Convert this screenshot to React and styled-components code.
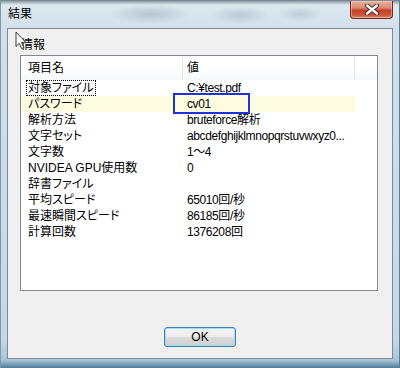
import React from 'react'
import styled, { createGlobalStyle } from 'styled-components'

const rows = [
	{ name: '対象ファイル', value: 'C:¥test.pdf', focus: true },
	{ name: 'パスワード', value: 'cv01', highlight: true },
	{ name: '解析方法', value: 'bruteforce解析' },
	{ name: '文字セット', value: 'abcdefghijklmnopqrstuvwxyz0...' },
	{ name: '文字数', value: '1～4' },
	{ name: 'NVIDEA GPU使用数', value: '0' },
	{ name: '辞書ファイル', value: '' },
	{ name: '平均スピード', value: '65010回/秒' },
	{ name: '最速瞬間スピード', value: '86185回/秒' },
	{ name: '計算回数', value: '1376208回' },
]

const App = () => {
	return (
		<>
			<GlobalStyle />
			<Window>
				<TitleBar>
					<Title>結果</Title>
					<CloseButton aria-label="閉じる">
						<svg width="16" height="11" viewBox="0 0 16 11">
							<path
								d="M3 1.5 L13 9.5 M13 1.5 L3 9.5"
								stroke="#3a2420"
								strokeWidth="4.2"
								strokeLinecap="round"
							/>
							<path
								d="M3 1.5 L13 9.5 M13 1.5 L3 9.5"
								stroke="#ffffff"
								strokeWidth="2.4"
								strokeLinecap="round"
							/>
						</svg>
					</CloseButton>
				</TitleBar>

				<Client>
					<GroupLabel>情報</GroupLabel>

					<List>
						<HeaderRow>
							<HeaderCell $width={162} $pad={7}>項目名</HeaderCell>
							<HeaderCell $width={172} $pad={4}>値</HeaderCell>
							<HeaderCell $width={22} $pad={0} $last />
						</HeaderRow>

						{rows.map((row) => (
							<Row key={row.name} $highlight={row.highlight}>
								<NameCell>
									{row.focus ? <Focus>{row.name}</Focus> : <Plain>{row.name}</Plain>}
								</NameCell>
								<ValueCell>{row.value}</ValueCell>
							</Row>
						))}

						<Marker />
					</List>

					<ButtonRow>
						<OkButton>OK</OkButton>
					</ButtonRow>

					<Cursor width="13" height="19" viewBox="0 0 13 19">
						<path
							d="M1 1 L1 15.5 L4.3 12.4 L6.6 17.6 L8.8 16.6 L6.5 11.6 L11 11.6 Z"
							fill="#ffffff"
							stroke="#3b3b3b"
							strokeWidth="1"
							strokeLinejoin="round"
						/>
					</Cursor>
				</Client>
			</Window>
		</>
	)
}

export default App

const GlobalStyle = createGlobalStyle`
	html, body {
		margin: 0;
		padding: 0;
	}

	body {
		width: 400px;
		height: 368px;
		overflow: hidden;
		font-family: "Liberation Sans", "Noto Sans CJK JP", sans-serif;
		font-size: 12px;
		font-feature-settings: "palt";
		color: #000;
	}
`

const Window = styled.div`
	position: relative;
	width: 400px;
	height: 368px;
	display: flex;
	flex-direction: column;
	box-sizing: border-box;
	background:
		radial-gradient(ellipse 40px 10px at 150px 14px, rgba(120, 135, 150, 0.35), transparent),
		radial-gradient(ellipse 30px 9px at 240px 15px, rgba(120, 135, 150, 0.3), transparent),
		radial-gradient(ellipse 22px 8px at 300px 14px, rgba(120, 135, 150, 0.25), transparent),
		linear-gradient(to bottom, #6e7a83 0, #a3b1bb 2px, #dde8ef 5px, #d3e0ea 28px, #c6d7e4 340px, #a9c4d8 360px, #4f7b97 368px);
	box-shadow: inset -1px 0 0 #5d7f96, inset 1px 0 0 #7d98ab;
`

const TitleBar = styled.div`
	height: 28px;
	display: flex;
	align-items: flex-start;
	padding: 0 7px 0 8px;
	box-sizing: border-box;
`

const Title = styled.span`
	margin-top: 7px;
	font-size: 12px;
	line-height: 14px;
`

const CloseButton = styled.button`
	margin-left: auto;
	margin-top: 1px;
	width: 43px;
	height: 18px;
	padding: 0;
	display: flex;
	align-items: center;
	justify-content: center;
	border: 1px solid #6b2a20;
	border-top: none;
	border-radius: 0 0 4px 4px;
	background: linear-gradient(to bottom, #e9b0a0 0%, #d98a74 40%, #c43f26 55%, #cf5a3d 85%, #e08a6a 100%);
	box-shadow: inset 0 0 0 1px rgba(255, 220, 210, 0.45);
`

const Client = styled.div`
	position: relative;
	flex: 1;
	margin: 0 7px 9px 7px;
	padding-top: 8px;
	display: flex;
	flex-direction: column;
	border: 1px solid #7b8a96;
	background: #f0f0f0;
`

const GroupLabel = styled.div`
	margin-left: 13px;
	height: 16px;
	line-height: 16px;
`

const List = styled.div`
	position: relative;
	margin: 2px 0 0 12px;
	width: 358px;
	height: 236px;
	box-sizing: border-box;
	border: 1px solid #828790;
	background: #ffffff;
`

const HeaderRow = styled.div`
	display: flex;
	height: 24px;
	background: linear-gradient(to bottom, #ffffff 0%, #ffffff 50%, #f7f8fa 100%);
`

const HeaderCell = styled.div`
	width: ${(p) => p.$width}px;
	padding-left: ${(p) => p.$pad}px;
	box-sizing: border-box;
	line-height: 24px;
	border-right: ${(p) => (p.$last ? 'none' : '1px solid #e3e6ea')};
`

const Row = styled.div`
	display: flex;
	width: 334px;
	height: 16px;
	background: ${(p) => (p.$highlight ? '#fdfce0' : 'transparent')};
`

const NameCell = styled.div`
	width: 162px;
	padding-left: 5px;
	box-sizing: border-box;
	white-space: nowrap;
	overflow: hidden;
`

const Plain = styled.span`
	display: inline-block;
	padding: 0 1px 0 2px;
	line-height: 16px;
`

const Focus = styled.span`
	display: inline-block;
	height: 16px;
	padding: 0 1px 0 1px;
	box-sizing: border-box;
	border: 1px dotted #000;
	line-height: 14px;
`

const ValueCell = styled.div`
	width: 172px;
	padding-left: 4px;
	box-sizing: border-box;
	line-height: 16px;
	white-space: nowrap;
	overflow: hidden;
	letter-spacing: -0.4px;
`

const Marker = styled.div`
	position: absolute;
	left: 152px;
	top: 37px;
	width: 77px;
	height: 21px;
	box-sizing: border-box;
	border: 2px solid #1f33d4;
`

const ButtonRow = styled.div`
	display: flex;
	justify-content: center;
	margin-top: 36px;
`

const OkButton = styled.button`
	width: 72px;
	height: 20px;
	padding: 0;
	font-family: inherit;
	font-size: 12px;
	color: #000;
	border: 1px solid #3c7fb1;
	border-radius: 3px;
	background: linear-gradient(to bottom, #f4f4f4 0%, #ececec 48%, #dcdcdc 52%, #cfcfcf 100%);
	box-shadow: inset 0 0 0 1px #9fdcf5;
`

const Cursor = styled.svg`
	position: absolute;
	left: 7px;
	top: 2px;
`
